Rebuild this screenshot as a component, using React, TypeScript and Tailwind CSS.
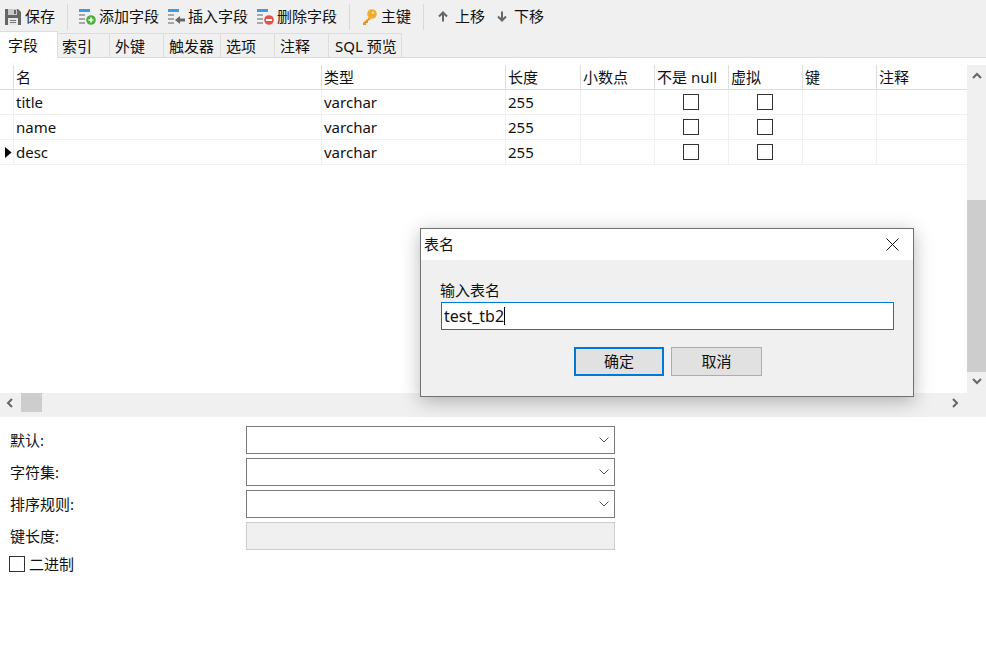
import React from "react";

const font = { fontFamily: '"Noto Sans", "Noto Sans CJK SC", sans-serif' };

const Lines = () => (
  <>
    <rect x="0" y="1" width="11" height="3" fill="#3d9be0" />
    <rect x="0" y="6" width="6" height="2" fill="#a8a8a8" />
    <rect x="0" y="10" width="6" height="2" fill="#a8a8a8" />
    <rect x="0" y="14" width="6" height="2" fill="#a8a8a8" />
  </>
);

const SaveIcon = () => (
  <svg width="16" height="16" viewBox="0 0 16 16" className="block shrink-0">
    <path d="M0 0H13L16 3V16H0Z" fill="#666" />
    <rect x="3" y="0" width="9" height="6" fill="#c9c9c9" />
    <rect x="9" y="1" width="2" height="4" fill="#666" />
    <rect x="3" y="9" width="10" height="7" fill="#e6e6e6" />
    <rect x="5" y="11" width="6" height="1" fill="#777" />
    <rect x="5" y="13" width="6" height="1" fill="#777" />
  </svg>
);

const AddIcon = () => (
  <svg width="17" height="17" viewBox="0 0 17 17" className="block shrink-0">
    <Lines />
    <circle cx="12" cy="12" r="4.8" fill="#4cae3c" />
    <path d="M12 9.5V14.5M9.5 12H14.5" stroke="#fff" strokeWidth="1.6" />
  </svg>
);

const InsertIcon = () => (
  <svg width="17" height="17" viewBox="0 0 17 17" className="block shrink-0">
    <Lines />
    <path d="M7 12L12 8V10.5H17V13.5H12V16Z" fill="#666" />
  </svg>
);

const DeleteIcon = () => (
  <svg width="17" height="17" viewBox="0 0 17 17" className="block shrink-0">
    <Lines />
    <circle cx="12" cy="12" r="4.8" fill="#e2524a" />
    <rect x="9" y="11" width="6" height="2" fill="#fff" />
  </svg>
);

const KeyIcon = () => (
  <svg width="15" height="16" viewBox="0 0 15 16" className="block shrink-0">
    <path d="M7 8.5L1 14V16H4V14H6V12L9 10" fill="#e09a1e" />
    <circle cx="10" cy="5" r="4.8" fill="#f0ac2e" />
    <circle cx="11" cy="3.8" r="1.3" fill="#fbe6b4" />
  </svg>
);

const UpIcon = () => (
  <svg width="10" height="11" viewBox="0 0 10 11" className="block shrink-0">
    <path d="M5 10.5V2M1 5.5L5 1.5L9 5.5" fill="none" stroke="#666" strokeWidth="2" />
  </svg>
);

const DownIcon = () => (
  <svg width="10" height="11" viewBox="0 0 10 11" className="block shrink-0">
    <path d="M5 0.5V9M1 5.5L5 9.5L9 5.5" fill="none" stroke="#666" strokeWidth="2" />
  </svg>
);

const Chevron = ({ d, className }: { d: string; className: string }) => (
  <svg width="10" height="10" viewBox="0 0 10 10" className={className}>
    <path d={d} fill="none" stroke="#666" strokeWidth="2" />
  </svg>
);

const SelectArrow = () => (
  <svg width="10" height="6" viewBox="0 0 10 6" className="block">
    <path d="M0.5 0.5L5 5L9.5 0.5" fill="none" stroke="#555" strokeWidth="1" />
  </svg>
);

const Tool = ({ icon, label, className }: { icon: React.ReactNode; label: string; className: string }) => (
  <div className={`flex items-center shrink-0 ${className}`}>
    {icon}
    <span className="whitespace-nowrap">{label}</span>
  </div>
);

const Sep = ({ className }: { className: string }) => <div className={`w-px h-[26px] shrink-0 bg-[#d9d9d9] ${className}`} />;

const tabs = [
  ["索引", "w-[53px] pl-[5px]"],
  ["外键", "w-[54px] pl-[5px]"],
  ["触发器", "w-[57px] pl-[5px]"],
  ["选项", "w-[54px] pl-[5px]"],
  ["注释", "w-[54px] pl-[5px]"],
  ["SQL 预览", "w-[73px] pl-[6px]"],
];

const cols = "grid grid-cols-[14px_308px_184px_75px_74px_74px_74px_74px_90px]";
const headers = ["", "名", "类型", "长度", "小数点", "不是 null", "虚拟", "键", "注释"];
const rows = ["title", "name", "desc"];

const Check = () => <div className="w-4 h-4 border border-[#333] bg-white" />;

const Row = ({ name, current }: { name: string; current: boolean }) => {
  const cell = "border-r border-[#f0f0f0] pl-[2px] flex items-center";
  return (
    <div className={`${cols} h-[25px] border-b border-[#f0f0f0]`}>
      <div className="border-r border-[#f0f0f0] flex items-center pl-[5px]">
        {current && (
          <svg width="7" height="11" viewBox="0 0 7 11" className="block">
            <path d="M0 0L6.5 5.5L0 11Z" fill="#000" />
          </svg>
        )}
      </div>
      <div className={cell}>{name}</div>
      <div className={cell}>varchar</div>
      <div className={cell}>255</div>
      <div className={cell} />
      <div className={`${cell} justify-center pl-0 pr-[4px]`}><Check /></div>
      <div className={`${cell} justify-center pl-0 pr-[4px]`}><Check /></div>
      <div className={cell} />
      <div className="" />
    </div>
  );
};

const SelectBox = () => (
  <div className="w-[369px] h-[28px] border border-[#7a7a7a] bg-white flex items-center justify-end pr-[5px]">
    <SelectArrow />
  </div>
);

const FormRow = ({ label, children }: { label: string; children: React.ReactNode }) => (
  <div className="flex items-center h-[28px]">
    <div className="w-[236px]">{label}</div>
    {children}
  </div>
);

export default function App() {
  return (
    <div
      className="relative w-[986px] h-[651px] overflow-hidden bg-white text-[15px] text-[#111] flex flex-col"
      style={font}
    >
      <div className="h-[33px] bg-[#f0f0f0] flex items-center shrink-0">
        <Tool icon={<SaveIcon />} label="保存" className="ml-[5px] gap-[4px] w-[62px]" />
        <Sep className="" />
        <Tool icon={<AddIcon />} label="添加字段" className="ml-[11px] gap-[3px] w-[89px]" />
        <Tool icon={<InsertIcon />} label="插入字段" className="gap-[3px] w-[89px]" />
        <Tool icon={<DeleteIcon />} label="删除字段" className="gap-[3px] w-[80px]" />
        <Sep className="ml-[12px]" />
        <Tool icon={<KeyIcon />} label="主键" className="ml-[12px] gap-[4px] w-[61px]" />
        <Sep className="" />
        <Tool icon={<UpIcon />} label="上移" className="ml-[14px] gap-[7px] w-[59px]" />
        <Tool icon={<DownIcon />} label="下移" className="gap-[7px]" />
      </div>

      <div className="h-[25px] shrink-0 bg-[#f0f0f0] border-b border-[#dcdcdc] flex items-stretch relative">
        <div className="absolute left-0 top-[-2px] w-[58px] h-[27px] bg-white border-t border-r border-[#dcdcdc] pl-[8px] leading-[27px]">
          字段
        </div>
        <div className="w-[57px] shrink-0" />
        {tabs.map(([t, w]) => (
          <div key={t} className={`${w} border-t border-r border-[#dcdcdc] leading-[25px] whitespace-nowrap`}>
            {t}
          </div>
        ))}
      </div>

      <div className="h-[7px] shrink-0" />

      <div className="h-[328px] shrink-0 flex">
        <div className="w-[967px]">
          <div className={`${cols} h-[25px] border-b border-[#dddddd]`}>
            {headers.map((h, i) => (
              <div
                key={i}
                className={`pl-[2px] flex items-center whitespace-nowrap ${i < 8 ? "border-r border-[#dddddd]" : ""}`}
              >
                {h}
              </div>
            ))}
          </div>
          {rows.map((r, i) => (
            <Row key={r} name={r} current={i === 2} />
          ))}
        </div>
        <div className="w-[19px] bg-[#f0f0f0] flex flex-col items-center">
          <Chevron d="M1 7L5 3L9 7" className="mt-[6px] mb-[119px] block" />
          <div className="w-full h-[172px] bg-[#cdcdcd]" />
          <Chevron d="M1 3L5 7L9 3" className="mt-[4px] block" />
        </div>
      </div>

      <div className="h-[24px] shrink-0 bg-[#f0f0f0] relative flex items-start">
        <Chevron d="M7 1L3 5L7 9" className="mt-[5px] ml-[5px] block" />
        <div className="w-[21px] h-[19px] bg-[#cdcdcd] ml-[6px]" />
        <Chevron d="M3 1L7 5L3 9" className="mt-[5px] ml-[908px] block" />
      </div>

      <div className="pl-[10px] pt-[9px] flex flex-col gap-[4px]">
        <FormRow label="默认:"><SelectBox /></FormRow>
        <FormRow label="字符集:"><SelectBox /></FormRow>
        <FormRow label="排序规则:"><SelectBox /></FormRow>
        <FormRow label="键长度:">
          <div className="w-[369px] h-[28px] border border-[#cccccc] bg-[#f0f0f0]" />
        </FormRow>
        <div className="flex items-center h-[16px] mt-[2px] -ml-[1px] gap-[4px]">
          <div className="w-4 h-4 border border-[#333] bg-white" />
          <span>二进制</span>
        </div>
      </div>

      <div className="absolute left-[420px] top-[228px] w-[494px] h-[169px] bg-[#f0f0f0] border border-[#707070] shadow-[0_4px_18px_rgba(0,0,0,0.28)] flex flex-col">
        <div className="h-[31px] bg-white flex items-center justify-between pl-[3px] pr-[14px] shrink-0">
          <span>表名</span>
          <svg width="13" height="13" viewBox="0 0 13 13" className="block">
            <path d="M0.5 0.5L12.5 12.5M12.5 0.5L0.5 12.5" stroke="#111" strokeWidth="1" />
          </svg>
        </div>
        <div className="pl-[19px] pt-[20px] leading-[21px]">输入表名</div>
        <div className="ml-[20px] mt-[1px] w-[453px] h-[28px] border border-[#0078d7] bg-white flex items-center pl-[2px] text-[16px]">
          <span>test_tb2</span>
          <span className="w-px h-[18px] bg-black" />
        </div>
        <div className="mt-[17px] ml-[153px] flex gap-[7px]">
          <div className="w-[90px] h-[29px] border-2 border-[#0078d7] bg-[#e1e1e1] flex items-center justify-center">确定</div>
          <div className="w-[91px] h-[29px] border border-[#adadad] bg-[#e1e1e1] flex items-center justify-center">取消</div>
        </div>
      </div>
    </div>
  );
}
